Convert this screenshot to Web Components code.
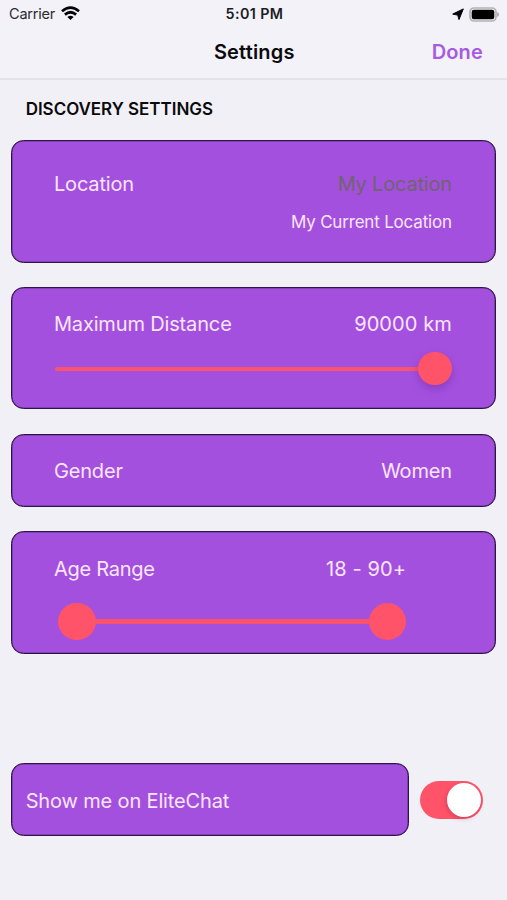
<!DOCTYPE html>
<html lang="en">
<head>
<meta charset="utf-8">
<title>Settings</title>
<style>
html, body { margin: 0; }
body { width: 507px; height: 900px; overflow: hidden; background: #f1f0f6; color: #0b0b0d; font-family: Inter, "Liberation Sans", sans-serif; }
</style>
</head>
<body>
<settings-screen></settings-screen>
<script>
const define = (name, html, setup) => {
  const tpl = document.createElement('template');
  tpl.innerHTML = html;
  customElements.define(name, class extends HTMLElement {
    connectedCallback() {
      if (this.shadowRoot) return;
      this.attachShadow({ mode: 'open' }).append(tpl.content.cloneNode(true));
      if (setup) setup(this);
    }
  });
};

define('status-bar', `
<style>
:host { display: grid; grid-template-columns: 1fr auto 1fr; align-items: center; height: 28px; padding: 0 7px 0 9px; box-sizing: border-box; line-height: 20px; }
.left, .right { display: flex; align-items: center; }
.right { justify-content: flex-end; gap: 4px; }
.carrier { font-size: 14.5px; letter-spacing: -.2px; color: #2b2b2e; }
.time { font-size: 14.3px; font-weight: 600; letter-spacing: .42px; color: #1c1c1f; }
svg { display: block; }
.wifi { margin-left: 6px; margin-top: -2px; }
</style>
<div class="left"><span class="carrier">Carrier</span>
<svg class="wifi" width="19" height="14" viewBox="0 0 19 14" fill="none" stroke="#050507" stroke-width="2.7">
<path d="M1 5.2Q9.5-1.9 18 5.2"/><path d="M3.9 8.6Q9.5 3.9 15.1 8.6"/><path d="M6.4 10.9Q9.5 8.4 12.6 10.9L9.5 14Z" fill="#050507" stroke="none"/></svg></div>
<span class="time">5:01 PM</span>
<div class="right">
<svg width="13" height="13" viewBox="0 0 13 13"><path d="M12.3.9L8 11.6L6.7 7.1L1.7 6.1Z" fill="#050507" stroke="#050507" stroke-width="1" stroke-linejoin="round"/></svg>
<svg width="32" height="15" viewBox="0 0 32 15"><rect x="2" y="1" width="26" height="13" rx="4" fill="#f1f0f6" stroke="#b3b3b6" stroke-width="1.7"/><path d="M29 5Q31.2 5.6 31.2 7.5T29 10Z" fill="#b3b3b6"/><rect x="3.7" y="2.7" width="22.6" height="9.6" rx="2.2" fill="#000"/></svg>
</div>`);

define('nav-bar', `
<style>
:host { display: grid; grid-template-columns: 1fr auto 1fr; align-items: center; height: 52px; padding: 0 24px 2px 25.5px; box-sizing: border-box; border-bottom: 2px solid #e3e2e7; font-size: 20px; font-weight: 600; line-height: 24px; }
.title { grid-column: 2; letter-spacing: .16px; }
.action { justify-self: end; color: #a65be0; letter-spacing: .15px; }
</style>
<span class="title"><slot></slot></span><span class="action"><slot name="action"></slot></span>`);

define('section-title', `
<style>
:host { display: block; padding: 19px 0 0 25.7px; height: 60.3px; box-sizing: border-box; font-size: 17px; line-height: 20px; font-weight: 600; letter-spacing: -.03px; }
</style><slot></slot>`);

define('settings-card', `
<style>
:host { display: block; height: var(--h, 122.3px); padding: var(--top, 30.7px) var(--right, 43.2px) 0 var(--left, 42.3px); box-sizing: border-box; border: 1px solid #2d1545; box-shadow: inset 0 0 0 .6px rgba(45,21,69,.55); border-radius: 12.5px; background: #a450df; color: #fbe6ff; }
</style><slot></slot>`);

define('setting-row', `
<style>
:host { display: flex; justify-content: space-between; font-size: 20px; line-height: 24px; white-space: pre; }
.label { letter-spacing: var(--ls, -.15px); }
.value { letter-spacing: var(--vls, -.2px); color: var(--value, inherit); }
</style><span class="label"><slot></slot></span><span class="value"><slot name="value"></slot></span>`);

define('setting-note', `
<style>
:host { display: block; margin-top: 16px; text-align: right; font-size: 17px; line-height: 20px; letter-spacing: -.19px; }
</style><slot></slot>`);

define('distance-slider', `
<style>
:host { display: flex; align-items: center; height: 33.4px; margin: 15.6px 0 0 .8px; }
.track { flex: 1; height: 4px; margin-top: 1px; border-radius: 2px 0 0 2px; background: #f9536f; }
.thumb { width: 33.4px; height: 33.4px; margin-left: -1px; border-radius: 50%; background: #ff5369; box-shadow: 0 4px 9px rgba(60,10,110,.26); }
</style><div class="track"></div><div class="thumb"></div>`);

define('range-slider', `
<style>
:host { display: flex; align-items: center; height: 37.4px; margin: 21.9px 0 0 4.3px; }
.track { flex: 1; height: 5px; margin: 0 -1px; background: #fb526c; }
.thumb { width: 37.4px; height: 37.4px; border-radius: 50%; background: #ff5369; }
</style><div class="thumb"></div><div class="track"></div><div class="thumb"></div>`);

define('toggle-switch', `
<style>
:host { display: flex; justify-content: flex-end; align-items: center; width: 63px; height: 38px; padding-right: 2.4px; box-sizing: border-box; border-radius: 19px; background: #ff5369; }
.knob { width: 34px; height: 34px; border-radius: 50%; background: #fff; box-shadow: -1px 2px 4px rgba(90,10,30,.22); }
</style><div class="knob"></div>`);

define('settings-screen', `
<style>
:host { display: block; width: 507px; height: 900px; }
.head { background: #f3f2f8; }
.cards { display: flex; flex-direction: column; gap: 24.4px; padding: 0 11px 0 10.6px; }
.location { --value: #70636f; }
.distance { --top: 24.4px; }
.gender { --h: 73.3px; --top: 24px; }
.age { --top: 24.8px; --right: 89px; }
.footer { display: grid; grid-template-columns: 398.5px 63px; column-gap: 11px; align-items: center; margin-top: 109.5px; padding-left: 10.6px; }
.show { --h: 73.3px; --top: 25px; --left: 14.1px; --right: 10px; }
</style>
<div class="head"><status-bar></status-bar><nav-bar>Settings<span slot="action">Done</span></nav-bar></div>
<section-title>DISCOVERY SETTINGS</section-title>
<div class="cards">
<settings-card class="location"><setting-row>Location<span slot="value">My Location</span></setting-row><setting-note>My Current Location</setting-note></settings-card>
<settings-card class="distance"><setting-row style="--vls:.08px">Maximum Distance<span slot="value">90000 km</span></setting-row><distance-slider></distance-slider></settings-card>
<settings-card class="gender"><setting-row>Gender<span slot="value">Women</span></setting-row></settings-card>
<settings-card class="age"><setting-row style="--ls:-.25px;--vls:.1px">Age Range<span slot="value">18 - 90+</span></setting-row><range-slider></range-slider></settings-card>
</div>
<div class="footer"><settings-card class="show"><setting-row>Show me on EliteChat</setting-row></settings-card><toggle-switch></toggle-switch></div>`);
</script>
</body>
</html>
